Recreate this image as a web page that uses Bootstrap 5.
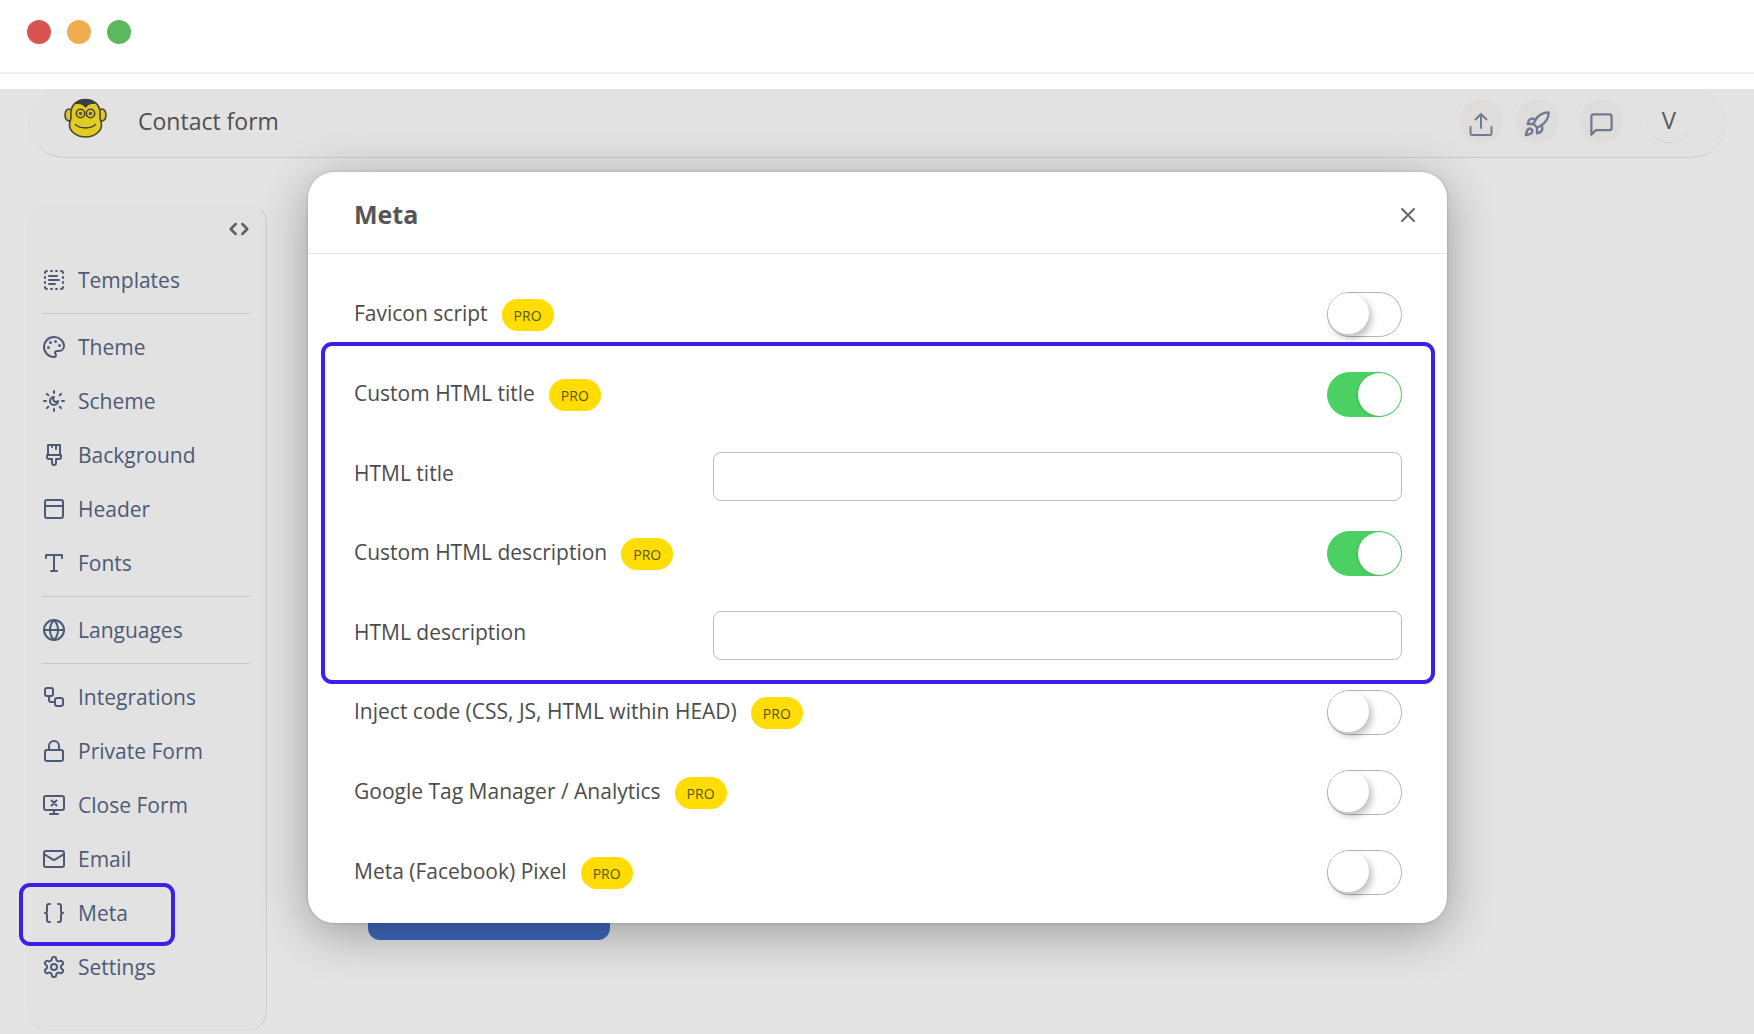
<!DOCTYPE html>
<html lang="en">
<head>
<meta charset="utf-8">
<meta name="viewport" content="width=device-width, initial-scale=1">
<title>Contact form</title>
<link href="https://cdn.jsdelivr.net/npm/bootstrap@5.3.0/dist/css/bootstrap.min.css" rel="stylesheet">
<style>
body { font-family: "Open Sans", "Noto Sans", sans-serif; font-size: 21px; line-height: 28px; color: #4c4c4c; background: #fff; min-height: 100vh; }
svg { flex: none; fill: none; stroke: currentColor; stroke-width: 2; stroke-linecap: round; stroke-linejoin: round; }
.chrome-bar { padding: 20px 27px 28px; gap: 16px; border-bottom: 2px solid #f0efe9; }
.dot { width: 24px; height: 24px; }
.stage { background: #e4e4e4; margin: 15px 0 1px; overflow: hidden; }
.topbar { height: 69px; margin: 0 27px 0 28px; padding: 0 36px 5px; background: #e2e2e2; border-bottom: 1px solid #cbcbcb; border-radius: 36px 36px 40px 40px; }
.logo { margin-bottom: 6px; }
.form-name { font-size: 23px; margin-left: 31px; color: #505050; }
.tool { width: 44px; height: 44px; padding: 7px 0 0; background: #dedddb; color: #707a90; border: 0; line-height: 1; }
.thick { stroke-width: 3; }
.user-letter { background: none; color: #5a5a5a; padding: 0; font-size: 24px; border-bottom: 1px solid #d2d2d2; }
.side { width: 240px; margin: 45px 0 3px 27px; padding: 14px 16px 36px 14px; background: #e2e2e2; border: 1px solid #d9d9d9; border-left-color: #e2e2e2; border-top-color: #e2e2e2; border-right-color: #cdcdcd; border-radius: 20px; }
.side-link { height: 54px; gap: 12px; color: #4d5a76; text-decoration: none; }
.side-link:hover { color: #2f3b57; }
.side-line { height: 1px; margin: 6px 0; background: #c6c6c6; }
.collapse-btn { padding: 0 1px; height: 22px; margin-bottom: 13px; color: #5f5f5f; border: 0; }
.marked { position: relative; }
.marked::after { content: ""; position: absolute; inset: -3px 75px -6px -23px; border: 4px solid #3a20e8; border-radius: 11px; pointer-events: none; }
.canvas { padding: 45px 101px 0; }
.submit-btn { width: 242px; height: 56px; margin-top: 681px; background: #4068bc; border-radius: 12px; border: 0; }
.meta-dialog { position: absolute; top: 83px; left: 1px; right: 0; margin: 0 auto; max-width: 1139px; }
.meta-box { border: 0; border-radius: 26px; background: #fff; color: #4c4c4c; box-shadow: 0 0 3px rgba(0,0,0,.2), 0 10px 50px rgba(0,0,0,.32); padding-bottom: 23px; }
.meta-head { height: 82px; padding: 4px 27px 0 46px; border-bottom: 1px solid #e4e4e4; }
.meta-title { font-size: 25px; line-height: 32px; font-weight: 700; margin: 0 0 2px; color: #555; }
.close-x { width: 24px; height: 24px; padding: 0; border: 0; color: #666; }
.close-x svg { display: block; }
.meta-body { padding: 8px 45px 0 46px; }
.opt { height: 80px; padding-top: 30px; }
.opt-field { height: 79px; }
.opt-name { margin-top: 7px; }
.opt-field .opt-name { flex: 0 0 359px; }
.pro { height: 32px; padding: 0 12px; margin: 7px 0 0 14px; line-height: 33px; font-size: 14px; font-weight: 400; background: #fd0; color: #5c5320; border-radius: 16px; }
.opt-input { height: 49px; border: 1px solid #bdbdbd; border-radius: 8px; }
.toggle { appearance: none; flex: none; width: 75px; height: 45px; margin: 0 0 0 auto; border: 1px solid #b4b4b4; border-radius: 23px; background: #fff; cursor: pointer; }
.toggle::before { content: ""; display: block; width: 41px; height: 41px; border-radius: 50%; background: #fff; box-shadow: 3px 4px 7px rgba(0,0,0,.26); }
.toggle:checked { background: #4bd163; border-color: #4bd163; }
.toggle:checked::before { width: 43px; height: 43px; margin-left: 30px; box-shadow: -1px 1px 3px rgba(0,0,0,.12); }
.boxed::after { inset: 0 -33px -24px; }
</style>
</head>
<body class="d-flex flex-column">
<div class="chrome-bar d-flex">
  <span class="dot rounded-circle" style="background:#d9534f"></span>
  <span class="dot rounded-circle" style="background:#f0ad4e"></span>
  <span class="dot rounded-circle" style="background:#5cb85c"></span>
</div>

<div class="stage position-relative flex-grow-1 d-flex flex-column">
  <header class="topbar d-flex align-items-center">
    <svg class="logo" width="43" height="40" viewBox="0 0 43 40" aria-hidden="true">
      <g stroke="#49463a" stroke-width="1.600">
        <ellipse cx="5" cy="17" rx="4" ry="6" fill="#dfc926"/><ellipse cx="38" cy="17" rx="4" ry="6" fill="#dfc926"/>
        <path d="M21.500 1.500C12.500 1.500 7.500 7 7 14c-.2 3 .5 5-.5 8-.5 1.500-1 3-1 5 0 7 8 12 16 12s16-5 16-12c0-2-.5-3.500-1-5-1-3-.3-5-.5-8C35.500 7 30.500 1.500 21.500 1.500z" fill="#e3cc22"/>
        <path d="M12 5.500C14.500 2.500 18 1.500 21.500 1.500s7 1 9.500 4c-4.500-.5-7.500 1-9.500 4-2-3-5-4.500-9.500-4z" fill="#363f49" stroke="#363f49" stroke-width="1"/>
        <circle cx="16.500" cy="15.500" r="4.200" fill="#e3cc22"/><circle cx="26.500" cy="15.500" r="4.200" fill="#e3cc22"/>
        <circle cx="16.500" cy="15.500" r="1.800" fill="#555" stroke="none"/><circle cx="26.500" cy="15.500" r="1.800" fill="#555" stroke="none"/>
        <path d="M11.500 26.500c5 4.500 15 4.500 20 0"/>
      </g>
    </svg>
    <span class="form-name">Contact form</span>
    <div class="d-flex ms-auto">
      <button class="tool rounded-circle me-1" aria-label="Share"><svg width="28" height="28" viewBox="0 0 28 28"><path d="M14 18V4M8.500 9.500L14 4l5.500 5.500M3.500 17v6.500a1.500 1.500 0 0 0 1.500 1.500h18a1.500 1.500 0 0 0 1.500-1.500V17"/></svg></button>
      <button class="tool rounded-circle ms-2 me-3" aria-label="Publish"><svg width="28" height="28" viewBox="0 0 24 24"><path d="M4.500 16.500c-1.500 1.260-2 5-2 5s3.740-.5 5-2c.71-.84.7-2.130-.09-2.910a2.180 2.180 0 0 0-2.910-.09z"/><path d="m12 15-3-3a22 22 0 0 1 2-3.950A12.880 12.880 0 0 1 22 2c0 2.720-.78 7.500-6 11a22.350 22.350 0 0 1-4 2z"/><path d="M9 12H4s.55-3.030 2-4c1.620-1.080 5 0 5 0M12 15v5s3.030-.55 4-2c1.080-1.620 0-5 0-5"/></svg></button>
      <button class="tool rounded-circle ms-1 me-4" aria-label="Comments"><svg width="27" height="27" viewBox="0 0 24 24"><path d="M21 15a2 2 0 0 1-2 2H7l-4 4V5a2 2 0 0 1 2-2h14a2 2 0 0 1 2 2z"/></svg></button>
      <button class="tool user-letter rounded-circle">V</button>
    </div>
  </header>

  <div class="d-flex align-items-start">
    <nav class="side d-flex flex-column" aria-label="Form builder">
      <button class="collapse-btn btn align-self-end d-flex align-items-center" aria-label="Collapse"><svg class="thick" width="20" height="20" viewBox="0 0 24 24"><path d="M16 18l6-6-6-6M8 6l-6 6 6 6"/></svg></button>
      <a class="side-link d-flex align-items-center" href="#"><svg width="24" height="24" viewBox="0 0 24 24"><path d="M5 3a2 2 0 0 0-2 2M19 3a2 2 0 0 1 2 2M21 19a2 2 0 0 1-2 2M5 21a2 2 0 0 1-2-2M9 3h1M9 21h1M14 3h1M14 21h1M3 9v1M21 9v1M3 14v1M21 14v1M7 8h8M7 12h10M7 16h6"/></svg>Templates</a>
      <div class="side-line"></div>
      <a class="side-link d-flex align-items-center" href="#"><svg width="24" height="24" viewBox="0 0 24 24"><path d="M12 22a1 1 0 0 1 0-20 10 9 0 0 1 10 9 5 5 0 0 1-5 5h-2.250a1.750 1.750 0 0 0-1.400 2.800l.3.4a1.750 1.750 0 0 1-1.400 2.800z"/><g fill="currentColor"><circle cx="13.5" cy="6.500" r=".5"/><circle cx="17.500" cy="10.500" r=".5"/><circle cx="8.500" cy="7.500" r=".5"/><circle cx="6.500" cy="12.500" r=".5"/></g></svg>Theme</a>
      <a class="side-link d-flex align-items-center" href="#"><svg width="24" height="24" viewBox="0 0 24 24"><path d="M12 8a2.830 2.830 0 0 0 4 4 4 4 0 1 1-4-4M12 2v2M12 20v2M4.900 4.900l1.400 1.400M17.700 17.700l1.400 1.400M2 12h2M20 12h2M6.300 17.700l-1.400 1.400M19.100 4.900l-1.400 1.400"/></svg>Scheme</a>
      <a class="side-link d-flex align-items-center" href="#"><svg width="24" height="24" viewBox="0 0 24 24"><path d="M14 19.900V16h3a2 2 0 0 0 2-2v-2H5v2a2 2 0 0 0 2 2h3v3.900a2 2 0 1 0 4 0zM6 12V2h12v10M14 2v4M10 2v2"/></svg>Background</a>
      <a class="side-link d-flex align-items-center" href="#"><svg width="24" height="24" viewBox="0 0 24 24"><rect x="3" y="3" width="18" height="18" rx="2"/><path d="M3 9h18"/></svg>Header</a>
      <a class="side-link d-flex align-items-center" href="#"><svg width="24" height="24" viewBox="0 0 24 24"><path d="M4 7V4h16v3M9 20h6M12 4v16"/></svg>Fonts</a>
      <div class="side-line"></div>
      <a class="side-link d-flex align-items-center" href="#"><svg width="24" height="24" viewBox="0 0 24 24"><circle cx="12" cy="12" r="10"/><path d="M12 2a14.500 14.500 0 0 0 0 20 14.500 14.500 0 0 0 0-20M2 12h20"/></svg>Languages</a>
      <div class="side-line"></div>
      <a class="side-link d-flex align-items-center" href="#"><svg width="24" height="24" viewBox="0 0 24 24"><rect x="3" y="3" width="8" height="8" rx="2"/><path d="M7 11v4a2 2 0 0 0 2 2h4"/><rect x="13" y="13" width="8" height="8" rx="2"/></svg>Integrations</a>
      <a class="side-link d-flex align-items-center" href="#"><svg width="24" height="24" viewBox="0 0 24 24"><rect x="3" y="11" width="18" height="11" rx="2"/><path d="M7 11V7a5 5 0 0 1 10 0v4"/></svg>Private Form</a>
      <a class="side-link d-flex align-items-center" href="#"><svg width="24" height="24" viewBox="0 0 24 24"><path d="M14.500 12.500l-5-5M9.500 12.500l5-5M12 17v4M8 21h8"/><rect x="2" y="3" width="20" height="14" rx="2"/></svg>Close Form</a>
      <a class="side-link d-flex align-items-center" href="#"><svg width="24" height="24" viewBox="0 0 24 24"><rect x="2" y="4" width="20" height="16" rx="2"/><path d="M22 7l-8.970 5.700a1.940 1.940 0 0 1-2.060 0L2 7"/></svg>Email</a>
      <a class="side-link marked d-flex align-items-center" href="#"><svg width="24" height="24" viewBox="0 0 24 24"><path d="M8 3H7a2 2 0 0 0-2 2v5a2 2 0 0 1-2 2 2 2 0 0 1 2 2v5a2 2 0 0 0 2 2h1M16 21h1a2 2 0 0 0 2-2v-5a2 2 0 0 1 2-2 2 2 0 0 1-2-2V5a2 2 0 0 0-2-2h-1"/></svg>Meta</a>
      <a class="side-link d-flex align-items-center" href="#"><svg width="24" height="24" viewBox="0 0 24 24"><path d="M12.220 2h-.44a2 2 0 0 0-2 2v.18a2 2 0 0 1-1 1.730l-.43.25a2 2 0 0 1-2 0l-.15-.08a2 2 0 0 0-2.730.73l-.22.38a2 2 0 0 0 .73 2.730l.15.1a2 2 0 0 1 1 1.720v.51a2 2 0 0 1-1 1.740l-.15.09a2 2 0 0 0-.73 2.730l.22.38a2 2 0 0 0 2.730.73l.15-.08a2 2 0 0 1 2 0l.43.25a2 2 0 0 1 1 1.730V20a2 2 0 0 0 2 2h.44a2 2 0 0 0 2-2v-.18a2 2 0 0 1 1-1.730l.43-.25a2 2 0 0 1 2 0l.15.08a2 2 0 0 0 2.730-.73l.22-.39a2 2 0 0 0-.73-2.730l-.15-.08a2 2 0 0 1-1-1.740v-.5a2 2 0 0 1 1-1.740l.15-.09a2 2 0 0 0 .73-2.730l-.22-.38a2 2 0 0 0-2.730-.73l-.15.08a2 2 0 0 1-2 0l-.43-.25a2 2 0 0 1-1-1.730V4a2 2 0 0 0-2-2z"/><circle cx="12" cy="12" r="3"/></svg>Settings</a>
    </nav>
    <main class="canvas flex-grow-1"><button class="submit-btn d-block" aria-label="Submit"></button></main>
  </div>

  <div class="meta-dialog" role="dialog" aria-labelledby="metaTitle">
    <div class="meta-box">
      <div class="meta-head d-flex align-items-center justify-content-between">
        <h1 class="meta-title" id="metaTitle">Meta</h1>
        <button class="close-x btn" aria-label="Close"><svg width="24" height="24" viewBox="0 0 24 24"><path d="M18 6L6 18M6 6l12 12"/></svg></button>
      </div>
      <div class="meta-body">
        <div class="opt d-flex align-items-start"><label class="opt-name" for="favicon">Favicon script</label><span class="pro">PRO</span><input class="toggle" type="checkbox" role="switch" id="favicon"></div>
        <div class="marked boxed">
          <div class="opt d-flex align-items-start"><label class="opt-name" for="ctitle">Custom HTML title</label><span class="pro">PRO</span><input class="toggle" type="checkbox" role="switch" id="ctitle" checked></div>
          <div class="opt opt-field d-flex align-items-start"><label class="opt-name" for="title">HTML title</label><input class="opt-input form-control" type="text" id="title"></div>
          <div class="opt d-flex align-items-start"><label class="opt-name" for="cdesc">Custom HTML description</label><span class="pro">PRO</span><input class="toggle" type="checkbox" role="switch" id="cdesc" checked></div>
          <div class="opt opt-field d-flex align-items-start"><label class="opt-name" for="desc">HTML description</label><input class="opt-input form-control" type="text" id="desc"></div>
        </div>
        <div class="opt d-flex align-items-start"><label class="opt-name" for="inject">Inject code (CSS, JS, HTML within HEAD)</label><span class="pro">PRO</span><input class="toggle" type="checkbox" role="switch" id="inject"></div>
        <div class="opt d-flex align-items-start"><label class="opt-name" for="gtm">Google Tag Manager / Analytics</label><span class="pro">PRO</span><input class="toggle" type="checkbox" role="switch" id="gtm"></div>
        <div class="opt d-flex align-items-start"><label class="opt-name" for="pixel">Meta (Facebook) Pixel</label><span class="pro">PRO</span><input class="toggle" type="checkbox" role="switch" id="pixel"></div>
      </div>
    </div>
  </div>
</div>
<script src="https://cdn.jsdelivr.net/npm/bootstrap@5.3.0/dist/js/bootstrap.bundle.min.js"></script>
</body>
</html>
